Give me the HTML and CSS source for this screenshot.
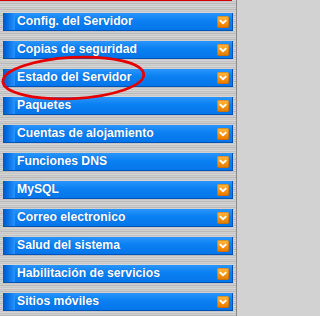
FILE: index.html
```html
<!DOCTYPE html>
<html lang="es">
<head>
<meta charset="utf-8">
<title>Menú</title>
<link rel="stylesheet" href="styles.css">
</head>
<body>
<div class="page">
  <div class="topline"></div>
  <ul class="menu">
    <li class="item"><span class="cap"></span><span class="label">Config. del Servidor</span><span class="arrow"><svg viewBox="0 0 12 12" width="12" height="12"><path d="M3.5 4.8 L6 7.2 L8.5 4.8" fill="none" stroke="#fff" stroke-width="2" stroke-linecap="square"/></svg></span></li>
    <li class="item"><span class="cap"></span><span class="label">Copias de seguridad</span><span class="arrow"><svg viewBox="0 0 12 12" width="12" height="12"><path d="M3.5 4.8 L6 7.2 L8.5 4.8" fill="none" stroke="#fff" stroke-width="2" stroke-linecap="square"/></svg></span></li>
    <li class="item"><span class="cap"></span><span class="label">Estado del Servidor</span><span class="arrow"><svg viewBox="0 0 12 12" width="12" height="12"><path d="M3.5 4.8 L6 7.2 L8.5 4.8" fill="none" stroke="#fff" stroke-width="2" stroke-linecap="square"/></svg></span></li>
    <li class="item"><span class="cap"></span><span class="label">Paquetes</span><span class="arrow"><svg viewBox="0 0 12 12" width="12" height="12"><path d="M3.5 4.8 L6 7.2 L8.5 4.8" fill="none" stroke="#fff" stroke-width="2" stroke-linecap="square"/></svg></span></li>
    <li class="item"><span class="cap"></span><span class="label">Cuentas de alojamiento</span><span class="arrow"><svg viewBox="0 0 12 12" width="12" height="12"><path d="M3.5 4.8 L6 7.2 L8.5 4.8" fill="none" stroke="#fff" stroke-width="2" stroke-linecap="square"/></svg></span></li>
    <li class="item"><span class="cap"></span><span class="label">Funciones DNS</span><span class="arrow"><svg viewBox="0 0 12 12" width="12" height="12"><path d="M3.5 4.8 L6 7.2 L8.5 4.8" fill="none" stroke="#fff" stroke-width="2" stroke-linecap="square"/></svg></span></li>
    <li class="item"><span class="cap"></span><span class="label">MySQL</span><span class="arrow"><svg viewBox="0 0 12 12" width="12" height="12"><path d="M3.5 4.8 L6 7.2 L8.5 4.8" fill="none" stroke="#fff" stroke-width="2" stroke-linecap="square"/></svg></span></li>
    <li class="item"><span class="cap"></span><span class="label">Correo electronico</span><span class="arrow"><svg viewBox="0 0 12 12" width="12" height="12"><path d="M3.5 4.8 L6 7.2 L8.5 4.8" fill="none" stroke="#fff" stroke-width="2" stroke-linecap="square"/></svg></span></li>
    <li class="item"><span class="cap"></span><span class="label">Salud del sistema</span><span class="arrow"><svg viewBox="0 0 12 12" width="12" height="12"><path d="M3.5 4.8 L6 7.2 L8.5 4.8" fill="none" stroke="#fff" stroke-width="2" stroke-linecap="square"/></svg></span></li>
    <li class="item"><span class="cap"></span><span class="label">Habilitación de servicios</span><span class="arrow"><svg viewBox="0 0 12 12" width="12" height="12"><path d="M3.5 4.8 L6 7.2 L8.5 4.8" fill="none" stroke="#fff" stroke-width="2" stroke-linecap="square"/></svg></span></li>
    <li class="item"><span class="cap"></span><span class="label">Sitios móviles</span><span class="arrow"><svg viewBox="0 0 12 12" width="12" height="12"><path d="M3.5 4.8 L6 7.2 L8.5 4.8" fill="none" stroke="#fff" stroke-width="2" stroke-linecap="square"/></svg></span></li>
  </ul>
  <svg class="circle" width="240" height="316" viewBox="0 0 240 316">
    <ellipse cx="73.3" cy="78" rx="70.5" ry="20.6" transform="rotate(-3 73.3 78)" fill="none" stroke="#e60000" stroke-width="2.7"/>
  </svg>
</div>
</body>
</html>
```
FILE: styles.css
```css
html, body {
  margin: 0;
  padding: 0;
  background: #d2d2d2;
}
body {
  width: 240px;
  height: 316px;
  overflow: hidden;
  font-family: "Liberation Sans", Arial, sans-serif;
}
.page {
  position: relative;
  width: 236px;
  height: 316px;
  border-right: 1px solid #8a8a8a;
  background: repeating-linear-gradient(to bottom,
    #d6d6d6 0 1px, #c2c2c2 1px 2px, #cfcfcf 2px 3px, #b9b9b9 3px 4px, #d0d0d0 4px 5px, #c6c6c6 5px 6px);
}
.topline {
  height: 1px;
  width: 232px;
  background: #d40000;
}
.menu {
  list-style: none;
  margin: 0;
  padding: 12px 0 0 3px;
  display: flex;
  flex-direction: column;
  gap: 10px;
}
.item {
  display: flex;
  align-items: center;
  width: 230px;
  height: 18px;
  box-sizing: border-box;
  border-bottom: 1px solid #0052b8;
  border-right: 1px solid #0052b8;
  background: linear-gradient(to bottom, #2a95fb 0%, #0a80f2 45%, #0576ea 100%);
}
.cap {
  align-self: stretch;
  width: 12px;
  background: linear-gradient(to right, #0058c6 0%, #0a6fe0 40%, #2592ff 100%);
}
.label {
  flex: 1;
  padding-left: 2px;
  color: #fff;
  font-weight: bold;
  font-size: 12.2px;
  line-height: 17px;
  white-space: nowrap;
  text-shadow: 0 0 1px rgba(0, 40, 120, 0.5);
}
.arrow {
  width: 12px;
  height: 12px;
  margin-right: 3px;
  border-radius: 2px;
  background: linear-gradient(to bottom, #ffbb44 0%, #f59410 55%, #e07a00 100%);
  box-shadow: inset 0 0 0 1px rgba(190, 90, 0, 0.45);
  display: flex;
}
.circle {
  position: absolute;
  left: 0;
  top: 0;
  pointer-events: none;
}
```
